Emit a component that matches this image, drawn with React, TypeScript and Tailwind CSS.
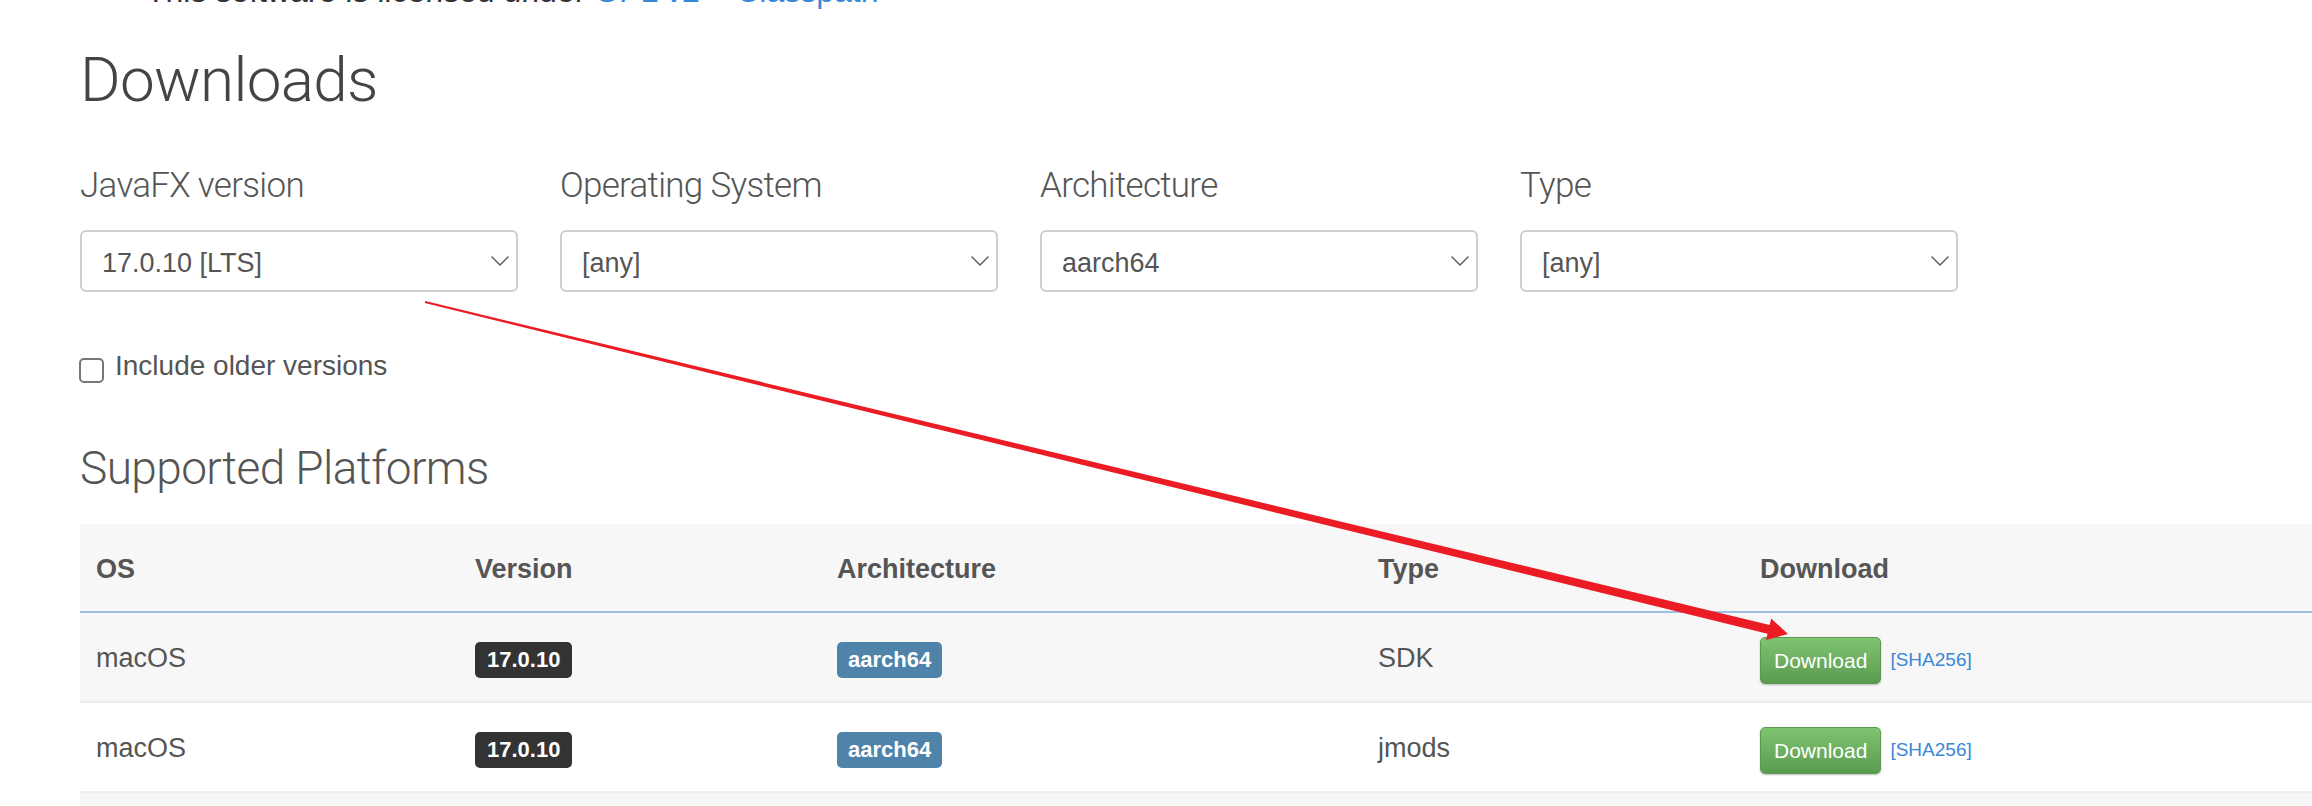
import React from 'react';

const body = { fontFamily: '"Liberation Sans", Arial, sans-serif' };
const light = { fontFamily: 'Roboto, "Liberation Sans", sans-serif' };

const filters = [
  { label: 'JavaFX version', value: '17.0.10 [LTS]' },
  { label: 'Operating System', value: '[any]' },
  { label: 'Architecture', value: 'aarch64' },
  { label: 'Type', value: '[any]' },
];

const rows = [
  { os: 'macOS', version: '17.0.10', arch: 'aarch64', type: 'SDK' },
  { os: 'macOS', version: '17.0.10', arch: 'aarch64', type: 'jmods' },
  { os: 'macOS', version: '17.0.10', arch: 'aarch64', type: 'monocle SDK' },
];

const cols = 'grid grid-cols-[379px_362px_541px_382px_1fr]';

function Chevron() {
  return (
    <svg width="18" height="10" viewBox="0 0 18 10" fill="none" stroke="#555" strokeWidth="1.4" strokeLinecap="round" strokeLinejoin="round">
      <path d="M1 1l8 8 8-8" />
    </svg>
  );
}

function Select({ value }: { value: string }) {
  return (
    <div className="flex h-[62px] items-center justify-between rounded-[6px] border-2 border-[#cfcfcf] bg-white pl-[20px] pr-[7px] text-[27px] text-[#555]">
      <span className="pt-[4px]">{value}</span>
      <Chevron />
    </div>
  );
}

function Arrow() {
  // tapered red annotation arrow, drawn over the page
  return (
    <svg className="pointer-events-none absolute left-0 top-0" width="2312" height="806">
      <polygon
        fill="#ec1c24"
        points="424.8,303.0 1767.5,633.7 1766.0,640.0 1788,634 1771.2,618.6 1769.7,624.9 425.2,301.0"
      />
    </svg>
  );
}

export default function App() {
  return (
    <div className="relative h-[806px] w-full overflow-hidden bg-white text-[#555]" style={body}>
      <div className="pl-[80px]">
        {/* license line, cut off by the top edge */}
        <ul className="-mt-[25px] h-[32px] list-disc pl-[66px] text-[32px] leading-none text-[#333]">
          <li>
            This software is licensed under <a className="text-[#3a87d6]">GPL v2 + Classpath</a>
          </li>
        </ul>

        <h1 className="mt-[42px] text-[62px] font-light leading-none tracking-[-0.7px] text-[#444]" style={light}>
          Downloads
        </h1>

        <div className="mt-[57px] grid grid-cols-[repeat(4,438px)] gap-x-[42px]">
          {filters.map((f) => (
            <div key={f.label}>
              <div className="mb-[27px] text-[35px] font-light leading-none tracking-[-0.7px] text-[#555]" style={light}>
                {f.label}
              </div>
              <Select value={f.value} />
            </div>
          ))}
        </div>

        <label className="mt-[60px] flex items-start gap-[11px] text-[28px] leading-none">
          <span className="mt-[6px] -ml-px h-[25px] w-[25px] rounded-[5px] border-2 border-[#767676] bg-white" />
          <span>Include older versions</span>
        </label>

        <h2 className="mt-[62px] text-[46px] font-light leading-none tracking-[-0.6px] text-[#555]" style={light}>
          Supported Platforms
        </h2>

        <div className="mt-[33px] text-[27px]">
          <div className={`${cols} h-[89px] items-center border-b-2 border-[#9bc1e2] bg-[#f7f7f7] pt-[4px] font-bold text-[#555]`}>
            {['OS', 'Version', 'Architecture', 'Type', 'Download'].map((h) => (
              <div key={h} className="pl-[16px]">{h}</div>
            ))}
          </div>
          {rows.map((r, i) => (
            <div
              key={i}
              className={`${cols} h-[90px] items-center border-b-2 border-[#eeeeee] pt-[3px] ${i % 2 === 0 ? 'bg-[#f7f7f7]' : 'bg-white'}`}
            >
              <div className="pl-[16px]">{r.os}</div>
              <div className="pl-[16px]">
                <span className="inline-flex h-[36px] items-center rounded-[5px] bg-[#333] px-[12px] text-[22px] font-bold text-white">
                  {r.version}
                </span>
              </div>
              <div className="pl-[16px]">
                <span className="inline-flex h-[36px] items-center rounded-[5px] bg-[#4f83a9] px-[11px] text-[22px] font-bold text-white">
                  {r.arch}
                </span>
              </div>
              <div className="pl-[16px]">{r.type}</div>
              <div className="flex items-center pl-[16px]">
                <button className="mt-[4px] h-[47px] rounded-[5px] border border-[#5a994f] bg-gradient-to-b from-[#7fc470] to-[#5b9b51] px-[13px] text-[21px] text-white shadow-[0_1px_2px_rgba(0,0,0,0.25)]">
                  Download
                </button>
                <a className="ml-[9px] mt-[4px] text-[19px] text-[#3a87d6]">[SHA256]</a>
              </div>
            </div>
          ))}
        </div>
      </div>
      <Arrow />
    </div>
  );
}
